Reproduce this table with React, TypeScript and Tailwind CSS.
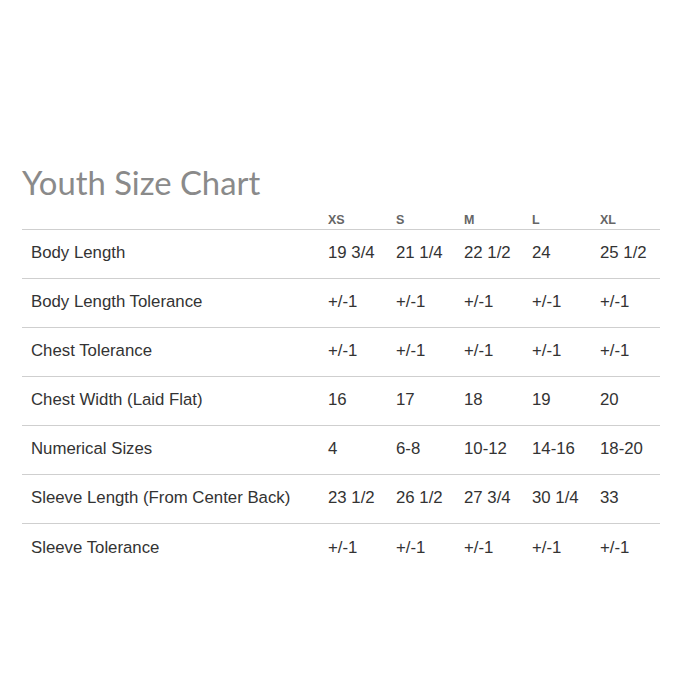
const sizes = ["XS", "S", "M", "L", "XL"];

const rows: { label: string; values: string[] }[] = [
  { label: "Body Length", values: ["19 3/4", "21 1/4", "22 1/2", "24", "25 1/2"] },
  { label: "Body Length Tolerance", values: ["+/-1", "+/-1", "+/-1", "+/-1", "+/-1"] },
  { label: "Chest Tolerance", values: ["+/-1", "+/-1", "+/-1", "+/-1", "+/-1"] },
  { label: "Chest Width (Laid Flat)", values: ["16", "17", "18", "19", "20"] },
  { label: "Numerical Sizes", values: ["4", "6-8", "10-12", "14-16", "18-20"] },
  { label: "Sleeve Length (From Center Back)", values: ["23 1/2", "26 1/2", "27 3/4", "30 1/4", "33"] },
  { label: "Sleeve Tolerance", values: ["+/-1", "+/-1", "+/-1", "+/-1", "+/-1"] },
];

export default function App() {
  return (
    <div className="h-[700px] w-[700px] bg-white pl-[22px] pt-[163px]">
      <div className="w-[638px]">
        <h1 className="font-['Lato','Noto_Sans',sans-serif] text-[32.8px] leading-[40px] text-[#8a8a8a]">
          Youth Size Chart
        </h1>
        <div className="mt-[7px] flex h-[20px] items-center pt-[2px] border-b border-[#cfcfcf] font-['Liberation_Sans',Arial,sans-serif] text-[12.5px] font-bold text-[#666]">
          <div className="w-[306px]" />
          {sizes.map((s) => (
            <div key={s} className="w-[68px] last:w-[60px]">
              {s}
            </div>
          ))}
        </div>
        {rows.map((row, i) => (
          <div
            key={row.label}
            className={`flex h-[49px] items-center pb-[2px] font-['Liberation_Sans',Arial,sans-serif] text-[16.8px] text-[#333] ${
              i < rows.length - 1 ? "border-b border-[#cfcfcf]" : ""
            }`}
          >
            <div className="w-[306px] pl-[9px]">{row.label}</div>
            {row.values.map((v, j) => (
              <div key={j} className="w-[68px] last:w-[60px]">
                {v}
              </div>
            ))}
          </div>
        ))}
      </div>
    </div>
  );
}
